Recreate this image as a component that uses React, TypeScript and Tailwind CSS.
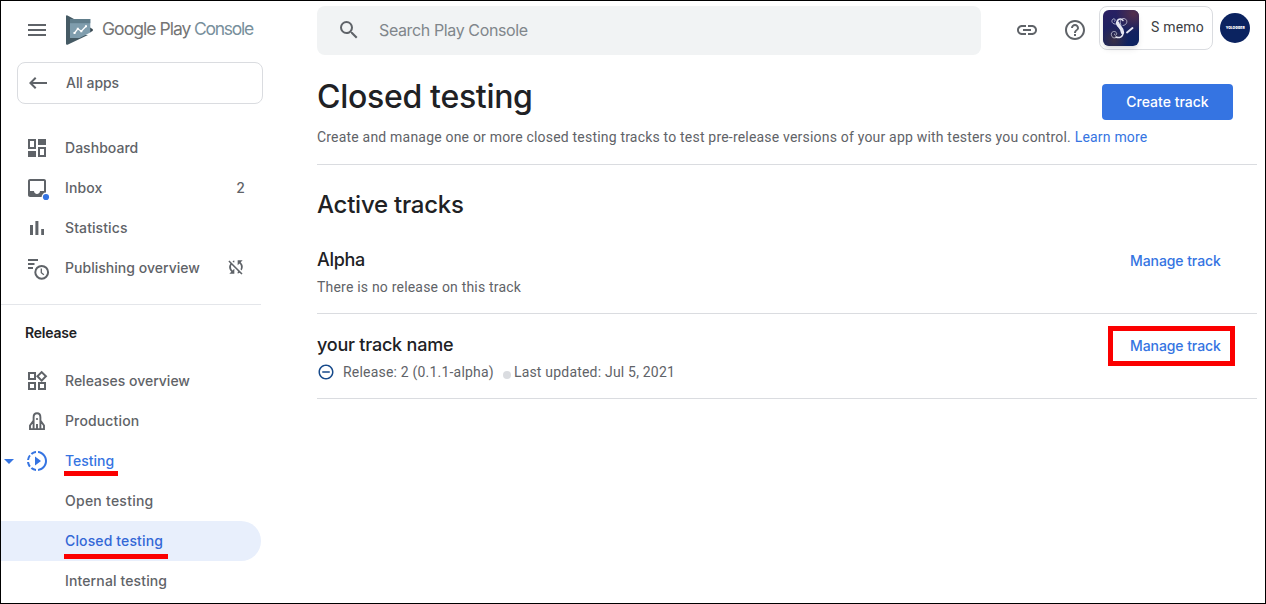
import React from "react";
import { MdLink, MdHelpOutline, MdSearch, MdRemoveCircleOutline, MdSlowMotionVideo, MdArrowDropDown, MdOutlineWidgets, MdSyncDisabled, MdMenu, MdKeyboardBackspace } from "react-icons/md";

const InboxIcon = () => (
  <svg viewBox="0 0 24 24" className="h-6 w-6 overflow-visible" fill="currentColor">
    <path d="M19 3H4.99c-1.11 0-1.98.89-1.98 2L3 19c0 1.1.88 2 1.99 2H19c1.1 0 2-.9 2-2V5c0-1.11-.9-2-2-2zm0 12h-4c0 1.66-1.35 3-3 3s-3-1.34-3-3H4.99V5H19v10z" />
    <circle cx="21" cy="21" r="4.4" fill="#fff" />
    <circle cx="21" cy="21" r="3.1" fill="#3574e2" />
  </svg>
);
const DashboardIcon = () => (
  <svg viewBox="0 0 24 24" className="h-6 w-6" fill="currentColor">
    <path d="M3 3h8v10H3zM5 5v6h4V5zM13 3h8v6h-8zM3 15h8v6H3zM13 11h8v10h-8zM15 13v6h4v-6z" fillRule="evenodd" />
  </svg>
);
const BarsIcon = () => (
  <svg viewBox="0 0 24 24" className="h-6 w-6" fill="currentColor">
    <path d="M5 9h3v10H5zM10.400 5h3v14h-3zM16.200 13H19v6h-2.800z" />
  </svg>
);
const ScheduleIcon = () => (
  <svg viewBox="0 0 24 24" className="h-6 w-6 overflow-visible" fill="none" stroke="currentColor">
    <path d="M3 4h10M3 8h6.500M3 12h5" strokeWidth="1.900" />
    <circle cx="16.700" cy="16.300" r="6.400" strokeWidth="2" />
    <path d="M16.300 12.500v4.200l2.600 2" strokeWidth="1.300" />
  </svg>
);
const RocketIcon = () => (
  <svg viewBox="0 0 24 24" className="h-6 w-6" fill="none" stroke="currentColor" strokeWidth="1.900">
    <path d="M8.600 20V8.200C8.600 5.800 10 4.300 12 4.300s3.400 1.500 3.400 3.900V20M8.600 11.500L5 16.500V20.100h14v-3.600l-3.600-5M12 15v5" />
    <circle cx="12" cy="10" r="1.100" fill="currentColor" stroke="none" />
  </svg>
);

const AppIcon = () => (
  <svg viewBox="0 0 36 36" className="h-9 w-9 shrink-0 rounded-md shadow-md">
    <defs>
      <linearGradient id="base" x1="0" y1="0" x2="0.500" y2="1">
        <stop offset="0" stopColor="#2c1f63" />
        <stop offset="1" stopColor="#0e2260" />
      </linearGradient>
      <radialGradient id="warm" cx="0.850" cy="0.100" r="0.500">
        <stop offset="0" stopColor="#54304c" />
        <stop offset="1" stopColor="#54304c" stopOpacity="0" />
      </radialGradient>
      <radialGradient id="dusk" cx="0.300" cy="0.850" r="0.400">
        <stop offset="0" stopColor="#3a3046" />
        <stop offset="1" stopColor="#3a3046" stopOpacity="0" />
      </radialGradient>
    </defs>
    <rect width="36" height="36" fill="url(#base)" />
    <rect width="36" height="36" fill="url(#warm)" />
    <rect width="36" height="36" fill="url(#dusk)" />
    <g fill="none" stroke="#e6e6f2" strokeLinecap="round">
      <path d="M20 10.500c-2-2.500-6-1.500-6 2 0 4.500 6 5.500 6 10.500 0 4-4 5.500-7 4" strokeWidth="1.500" />
      <path d="M14.500 13c.8 3.500 5 4.500 5 9.500" strokeWidth="3.400" />
      <path d="M18 15c-2-3 0-7 3-6.500 4 .5 4 6.500-1 7M13.500 14c-4 1-6-3-3.500-5 2-1 3 1.500 1.500 2.500M14 27c-3 2.500-6.500 0-5.500-4 2-3 6-1 5 1.500-1 1.500-2.500.5-2-.5" strokeWidth="0.900" opacity="0.750" />
      <path d="M24 22.500l5.500-4.500" strokeWidth="1.900" />
    </g>
  </svg>
);

type ItemProps = { icon?: React.ReactNode; label: string; ls?: string; tail?: React.ReactNode; color?: string; caret?: boolean; active?: boolean; mark?: string };
function Item({ icon, label, ls = "", tail, color = "text-[#5f6368]", caret, active, mark }: ItemProps) {
  return (
    <div className={`flex h-10 w-[260px] shrink-0 items-center rounded-r-full pr-4 ${color} ${active ? "bg-[#e8effc]" : ""}`}>
      <span className="flex w-6 shrink-0 justify-start">{caret && <MdArrowDropDown className="-ml-1 h-6 w-6" />}</span>
      <span className="flex w-10 shrink-0">{icon}</span>
      <span className={`relative text-sm font-medium whitespace-nowrap ${ls}`}>
        {label}
        {mark && <span className={`absolute -left-px h-[5px] bg-[#fb0000] ${mark}`} />}
      </span>
      {tail && <span className="ml-auto text-sm font-medium">{tail}</span>}
    </div>
  );
}

export default function App() {
  return (
    <div className="flex h-[604px] w-[1266px] overflow-hidden border border-black bg-white font-['Inter',sans-serif] text-[#202124]">
      <aside className="flex w-[262px] shrink-0 flex-col">
        <div className="flex h-[61px] items-center pl-6 pb-1 text-[#5f6368]">
          <MdMenu className="h-6 w-6" />
          <svg viewBox="0 0 28 30" className="ml-[17px] h-[30px] w-7">
            <path d="M0 1.200Q0 0 1.500.5L8 4v15L22 20 1.500 29.700Q0 30 0 28.800z" fill="#455a64" />
            <path d="M24 12.500l2.500 1.500q1 .9 0 2L24 17.500z" fill="#37474f" />
            <path d="M4 4h20.300v13.500L13.500 23H4z" fill="#7f9dad" />
            <path d="M4 4h20.300v4.200H4z" fill="#607d8b" />
            <path d="M8.500 18l3.300-4.200 3.500 2.400 4.700-5" fill="none" stroke="#fff" strokeWidth="1.300" />
            <path d="M7.500 17h2v2h-2zM10.800 12.800h2v2h-2zM14.300 15.200h2v2h-2zM19 10.200h2v2h-2z" fill="#fff" />
          </svg>
          <div className="mb-px ml-2 flex gap-[3px] text-[17.500px] whitespace-nowrap text-[#757575]">
            <span className="w-[89px] tracking-[-0.950px]">Google Play</span>
            <span className="tracking-[-1.250px] text-[#78909c]">Console</span>
          </div>
        </div>
        <div className="ml-4 flex h-[42px] w-[246px] shrink-0 items-center rounded-lg border border-[#dadce0] pl-2 text-[#5f6368]">
          <MdKeyboardBackspace className="h-6 w-6" />
          <span className="ml-4 text-sm font-medium tracking-[-0.05px]">All apps</span>
        </div>
        <nav className="mt-6 flex flex-col">
          <Item icon={<DashboardIcon />} label="Dashboard" ls="tracking-[0.03px]" />
          <Item icon={<InboxIcon />} label="Inbox" tail="2" ls="tracking-[0.1px]" />
          <Item icon={<BarsIcon />} label="Statistics" ls="tracking-[0.1px]" />
          <Item icon={<ScheduleIcon />} label="Publishing overview" ls="tracking-[0.03px]" tail={<MdSyncDisabled className="-mr-px mb-0.5 h-5 w-5" />} />
          <div className="mt-4 w-[260px] border-t border-[#e4e6ea] pt-[18px] pb-[18px] pl-6 text-sm leading-5 font-semibold tracking-[-0.2px]">Release</div>
          <Item icon={<MdOutlineWidgets className="h-6 w-6" />} label="Releases overview" />
          <Item icon={<RocketIcon />} label="Production" ls="tracking-[0.14px]" />
          <Item icon={<MdSlowMotionVideo className="h-6 w-6" />} label="Testing" color="text-[#3574e2]" caret mark="top-5 w-[54px]" />
          <Item label="Open testing" ls="tracking-[0.25px]" />
          <Item label="Closed testing" ls="tracking-[0.13px]" color="text-[#3367d6]" active mark="top-[23px] w-[104px]" />
          <Item label="Internal testing" ls="tracking-[0.13px]" />
        </nav>
      </aside>
      <main className="ml-[54px] flex w-[940px] flex-col">
        <header className="mt-[5px] flex h-[49px] shrink-0 items-center">
          <div className="flex h-[49px] w-[664px] shrink-0 items-center rounded-lg bg-[#f1f3f4] pl-5 text-[#5f6368]">
            <MdSearch className="mb-px h-6 w-6" />
            <span className="mb-px ml-[18px] text-base tracking-[-0.38px] text-[#80868b]">Search Play Console</span>
          </div>
          <MdLink className="mb-px ml-[34px] h-6 w-6 text-[#5f6368]" />
          <MdHelpOutline className="mb-px ml-6 h-6 w-6 text-[#5f6368]" />
          <div className="mb-1.5 ml-3 flex h-11 w-[114px] items-center rounded-lg border border-[#dadce0] pl-[3px]">
            <AppIcon />
            <span className="mb-0.5 ml-3 font-['Roboto',sans-serif] text-sm whitespace-nowrap tracking-[0.2px] text-[#3c4043]">S memo</span>
          </div>
          <div className="mb-1.5 ml-[7px] flex h-[30px] w-[30px] shrink-0 items-center justify-center overflow-hidden rounded-full bg-[#0b2360] text-[4px] leading-none font-black whitespace-nowrap text-white">
            <span className="scale-x-[.85]">YOLOGGER</span>
          </div>
        </header>
        <div className="flex h-[110px] shrink-0 border-b border-[#dadce0]">
          <div className="w-[785px] shrink-0 pt-[18px]">
            <h1 className="text-[32px] leading-[48px] font-[450] tracking-[-0.3px]">Closed testing</h1>
            <p className="mt-1.5 font-['Roboto',sans-serif] text-sm whitespace-nowrap tracking-[0.197px] text-[#5f6368]">Create and manage one or more closed testing tracks to test pre-release versions of your app with testers you control. <a className="text-[#3574e2]">Learn more</a></p>
          </div>
          <button className="mt-[29px] h-9 w-[131px] shrink-0 rounded bg-[#3574e2] text-sm font-medium whitespace-nowrap text-white">Create track</button>
        </div>
        <h2 className="mt-5 text-2xl leading-10 font-medium tracking-[-0.25px]">Active tracks</h2>
        <section className="flex h-[89px] border-b border-[#dadce0]">
          <div className="pt-[21px]">
            <h3 className="text-lg leading-7 font-medium tracking-[-0.3px]">Alpha</h3>
            <p className="mt-[3px] font-['Roboto',sans-serif] text-sm tracking-[0.2px] text-[#5f6368]">There is no release on this track</p>
          </div>
          <div className="mt-[16px] mr-[22px] ml-auto flex h-10 w-[127px] items-center pl-[22px] text-sm font-medium whitespace-nowrap tracking-[-0.08px] text-[#3574e2]">Manage track</div>
        </section>
        <section className="flex h-[85px] border-b border-[#dadce0]">
          <div className="pt-[17px]">
            <h3 className="text-lg leading-7 font-medium tracking-[-0.22px]">your track name</h3>
            <p className="mt-[3px] flex items-center font-['Roboto',sans-serif] text-sm tracking-[0.2px] text-[#5f6368]"><MdRemoveCircleOutline className="mr-2 h-[18px] w-[18px] text-[#174a8b]" />Release: 2 (0.1.1-alpha)<span className="mt-1.5 mr-[3px] ml-[9px] h-2 w-2 rounded-full bg-[#dadce0]" />Last updated: Jul 5, 2021</p>
          </div>
          <div className="mt-3 mr-[22px] ml-auto flex h-10 w-[127px] items-center border-[5px] border-[#fb0000] pl-[17px] text-sm font-medium whitespace-nowrap tracking-[-0.08px] text-[#3574e2]">Manage track</div>
        </section>
      </main>
    </div>
  );
}
